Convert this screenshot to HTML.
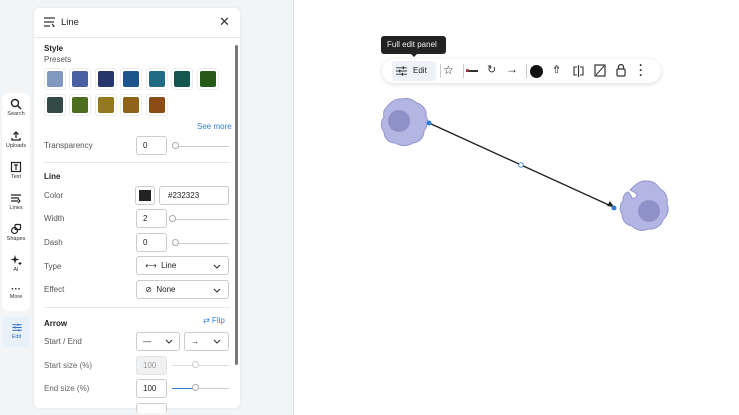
<!DOCTYPE html>
<html><head><style>
*{box-sizing:border-box;margin:0;padding:0}
body{width:739px;height:415px;overflow:hidden;background:#f2f4f6;font-family:"Liberation Sans",sans-serif;position:relative;color:#333}
.canvas{position:absolute;left:293px;top:0;width:446px;height:415px;background:#fff;border-left:1px solid #dde1e5}
.rail{position:absolute;left:2px;top:93px;width:28px;height:218px;background:#fff;border-radius:5px}
.ri{position:absolute;left:0;width:28px;text-align:center;font-size:5.5px;color:#333}
.ri svg{display:block;margin:0 auto 1px}
.editb{position:absolute;left:3px;top:317px;width:27px;height:30px;background:#e8f0fa;border-radius:4px;text-align:center;font-size:5.5px;color:#2f6fc0}
.panel{position:absolute;left:34px;top:8px;width:206px;height:400px;background:#fff;border-radius:5px;box-shadow:0 0 3px rgba(0,0,0,.08)}
.t{position:absolute;font-size:8px;color:#555}
.b{position:absolute;font-size:8px;font-weight:bold;color:#222}
.sw{position:absolute;width:22px;height:22px;border:1px solid #eee;border-radius:3px;padding:2px}
.sw i{display:block;width:16px;height:16px;border-radius:2px}
.in{position:absolute;height:19px;border:1px solid #ccc;border-radius:3px;font-size:8px;line-height:17px;padding-left:6px;color:#222;background:#fff}
.sl{position:absolute;height:1px;background:#ccc}
.kn{position:absolute;width:7px;height:7px;border:1px solid #aaa;border-radius:50%;background:#fff}
.hr{position:absolute;left:10px;width:186px;height:1px;background:#e6e6e6}
.chev{position:absolute;width:8px;height:5px}
.tb{position:absolute;left:382px;top:59px;width:279px;height:24px;background:#fff;border-radius:12px;box-shadow:0 1px 5px rgba(0,0,0,.15)}
</style></head><body>
<div class="canvas"></div>

<div class="rail">
 <div class="ri" style="top:5px"><svg width="12" height="12" viewBox="0 0 12 12"><circle cx="5" cy="5" r="3.5" fill="none" stroke="#222" stroke-width="1.4"/><path d="M7.5 7.5L11 11" stroke="#222" stroke-width="1.5"/></svg>Search</div>
 <div class="ri" style="top:37px"><svg width="12" height="12" viewBox="0 0 12 12"><path d="M6 8V2M3.5 4.5L6 2l2.5 2.5M2 8v2h8V8" fill="none" stroke="#222" stroke-width="1.3"/></svg>Uploads</div>
 <div class="ri" style="top:68px"><svg width="12" height="12" viewBox="0 0 12 12"><rect x="1.5" y="1.5" width="9" height="9" fill="none" stroke="#222" stroke-width="1.2"/><path d="M4 4h4M6 4v5" stroke="#222" stroke-width="1.2"/></svg>Text</div>
 <div class="ri" style="top:99px"><svg width="12" height="12" viewBox="0 0 12 12"><path d="M1 3h10M1 6h8M1 9h7M8 7l2 2-2 2" fill="none" stroke="#222" stroke-width="1.2"/></svg>Lines</div>
 <div class="ri" style="top:130px"><svg width="12" height="12" viewBox="0 0 12 12"><circle cx="4.5" cy="7.5" r="3" fill="none" stroke="#222" stroke-width="1.2"/><rect x="5" y="1.5" width="5.5" height="5" rx="1" fill="none" stroke="#222" stroke-width="1.2"/></svg>Shapes</div>
 <div class="ri" style="top:161px"><svg width="12" height="12" viewBox="0 0 12 12"><path d="M5 1L6 4.5 9.5 5.5 6 6.5 5 10 4 6.5 .5 5.5 4 4.5z" fill="#222"/><path d="M10 8v3M8.5 9.5h3" stroke="#222"/></svg>AI</div>
 <div class="ri" style="top:193px"><div style="font-size:10px;line-height:8px;font-weight:bold">···</div>More</div>
</div>
<div class="editb"><svg width="12" height="11" viewBox="0 0 12 12" style="display:block;margin:5px auto 1px"><path d="M1 3h10M1 6h10M1 9h10" stroke="#2f6fc0" stroke-width="1"/><path d="M7 2v2M4 5v2M8 8v2" stroke="#2f6fc0" stroke-width="1.4"/></svg>Edit</div>

<div class="panel">
 <svg style="position:absolute;left:10px;top:9px" width="12" height="10" viewBox="0 0 12 10"><path d="M0 1h11M0 5h10M0 9h6M8 7l2 2-2 2" fill="none" stroke="#333" stroke-width="1.2"/></svg>
 <div style="position:absolute;left:27px;top:9px;font-size:9.5px;color:#222">Line</div>
 <div style="position:absolute;left:185px;top:6px;font-size:13px;color:#333">✕</div>
 <div class="hr" style="left:0;width:206px;top:29px"></div>
 <div style="position:absolute;left:201px;top:37px;width:3px;height:320px;background:#777;border-radius:2px"></div>

 <div class="b" style="left:10px;top:36px">Style</div>
 <div class="t" style="left:10px;top:47px">Presets</div>
 <div class="sw" style="left:10px;top:60px"><i style="background:#8198bf"></i></div>
 <div class="sw" style="left:35px;top:60px"><i style="background:#4a5ea4"></i></div>
 <div class="sw" style="left:61px;top:60px"><i style="background:#24366a"></i></div>
 <div class="sw" style="left:86px;top:60px"><i style="background:#1d548e"></i></div>
 <div class="sw" style="left:112px;top:60px"><i style="background:#216b84"></i></div>
 <div class="sw" style="left:137px;top:60px"><i style="background:#145650"></i></div>
 <div class="sw" style="left:163px;top:60px"><i style="background:#275a18"></i></div>
 <div class="sw" style="left:10px;top:86px"><i style="background:#344a47"></i></div>
 <div class="sw" style="left:35px;top:86px"><i style="background:#4e6d1f"></i></div>
 <div class="sw" style="left:61px;top:86px"><i style="background:#947a1c"></i></div>
 <div class="sw" style="left:86px;top:86px"><i style="background:#8f641a"></i></div>
 <div class="sw" style="left:112px;top:86px"><i style="background:#8c4c15"></i></div>
 <div style="position:absolute;left:163px;top:114px;font-size:8px;color:#2f7fd0">See more</div>

 <div class="t" style="left:10px;top:133px">Transparency</div>
 <div class="in" style="left:102px;top:128px;width:31px">0</div>
 <div class="sl" style="left:142px;top:138px;width:53px"></div><div class="kn" style="left:138px;top:134px"></div>
 <div class="hr" style="top:154px"></div>

 <div class="b" style="left:10px;top:164px">Line</div>
 <div class="t" style="left:10px;top:183px">Color</div>
 <div style="position:absolute;left:101px;top:178px;width:20px;height:19px;border:1px solid #ccc;border-radius:3px;padding:3px"><div style="width:12px;height:11px;background:#232323"></div></div>
 <div class="in" style="left:125px;top:178px;width:70px;padding-left:8px">#232323</div>

 <div class="t" style="left:10px;top:206px">Width</div>
 <div class="in" style="left:102px;top:201px;width:31px">2</div>
 <div class="sl" style="left:140px;top:211px;width:55px"></div><div class="kn" style="left:135px;top:207px"></div>
 <div class="t" style="left:10px;top:230px">Dash</div>
 <div class="in" style="left:102px;top:225px;width:31px">0</div>
 <div class="sl" style="left:142px;top:235px;width:53px"></div><div class="kn" style="left:138px;top:231px"></div>

 <div class="t" style="left:10px;top:254px">Type</div>
 <div class="in" style="left:102px;top:248px;width:93px">&nbsp;⟷&nbsp; Line</div>
 <svg class="chev" style="left:179px;top:256px" viewBox="0 0 8 5"><path d="M1 1l3 3 3-3" fill="none" stroke="#333" stroke-width="1.1"/></svg>
 <div class="t" style="left:10px;top:277px">Effect</div>
 <div class="in" style="left:102px;top:272px;width:93px">&nbsp;⊘&nbsp; None</div>
 <svg class="chev" style="left:179px;top:280px" viewBox="0 0 8 5"><path d="M1 1l3 3 3-3" fill="none" stroke="#333" stroke-width="1.1"/></svg>
 <div class="hr" style="top:299px"></div>

 <div class="b" style="left:10px;top:311px">Arrow</div>
 <div style="position:absolute;left:169px;top:308px;font-size:8px;color:#2f7fd0">⇄ Flip</div>
 <div class="t" style="left:10px;top:329px">Start / End</div>
 <div class="in" style="left:102px;top:324px;width:44px">—</div>
 <svg class="chev" style="left:131px;top:331px" viewBox="0 0 8 5"><path d="M1 1l3 3 3-3" fill="none" stroke="#333" stroke-width="1.1"/></svg>
 <div class="in" style="left:150px;top:324px;width:45px">→</div>
 <svg class="chev" style="left:179px;top:331px" viewBox="0 0 8 5"><path d="M1 1l3 3 3-3" fill="none" stroke="#333" stroke-width="1.1"/></svg>
 <div class="t" style="left:10px;top:353px;color:#666">Start size (%)</div>
 <div class="in" style="left:102px;top:348px;width:31px;background:#f0f1f3;border-color:#e4e4e4;color:#999">100</div>
 <div class="sl" style="left:138px;top:357px;width:57px;background:#ddd"></div><div class="kn" style="left:158px;top:353px;border-color:#ccc"></div>
 <div class="t" style="left:10px;top:376px;color:#666">End size (%)</div>
 <div class="in" style="left:102px;top:371px;width:31px">100</div>
 <div class="sl" style="left:138px;top:380px;width:57px"></div><div class="sl" style="left:138px;top:380px;width:22px;background:#2f7fd0"></div><div class="kn" style="left:158px;top:376px"></div>
 <div class="in" style="left:102px;top:395px;width:31px;height:10px;border-bottom:none"></div>
</div>

<div style="position:absolute;left:381px;top:36px;width:65px;height:18px;background:#222;border-radius:3px;color:#eee;font-size:8px;line-height:18px;padding-left:6px">Full edit panel</div>
<div style="position:absolute;left:410px;top:53px;width:0;height:0;border-left:4px solid transparent;border-right:4px solid transparent;border-top:4px solid #222"></div>
<div class="tb">
 <div style="position:absolute;left:10px;top:2px;width:44px;height:20px;background:#eef2f6;border-radius:3px"></div>
 <svg style="position:absolute;left:14px;top:7px" width="11" height="10" viewBox="0 0 12 10"><path d="M0 1.5h12M0 5h12M0 8.5h12" stroke="#333"/><path d="M8 0v3M4 3.5v3M7 7v3" stroke="#333" stroke-width="1.5"/></svg>
 <div style="position:absolute;left:31px;top:7px;font-size:8px;color:#222">Edit</div>
 <div style="position:absolute;left:58px;top:5px;width:1px;height:14px;background:#ccc"></div>
 <div style="position:absolute;left:61px;top:4px;font-size:12px;color:#222">☆</div>
 <div style="position:absolute;left:81px;top:5px;width:1px;height:14px;background:#ccc"></div>
 <div style="position:absolute;left:84px;top:11px;width:12px;height:1.5px;background:#333"></div><div style="position:absolute;left:84px;top:10px;width:3px;height:3px;background:#a33;border-radius:50%"></div>
 <div style="position:absolute;left:105px;top:4px;font-size:11px;color:#333">↻</div>
 <div style="position:absolute;left:124px;top:3px;font-size:12px;color:#222">→</div>
 <div style="position:absolute;left:144px;top:5px;width:1px;height:14px;background:#ccc"></div>
 <div style="position:absolute;left:148px;top:6px;width:13px;height:13px;background:#111;border-radius:50%"></div>
 <div style="position:absolute;left:170px;top:4px;font-size:11px;color:#333">⇮</div>
 <svg style="position:absolute;left:191px;top:6px" width="11" height="12"><path d="M5.5 0v12M4 2H1v8h3M7 2h3v8H7" fill="none" stroke="#333" stroke-width="1.1"/></svg>
 <svg style="position:absolute;left:212px;top:5px" width="12" height="13"><rect x="1" y="1" width="10" height="11" fill="none" stroke="#333" stroke-width="1.2"/><path d="M2 11L10 2" stroke="#333"/></svg>
 <svg style="position:absolute;left:234px;top:5px" width="10" height="13"><rect x="1" y="5" width="8" height="7" rx="1" fill="none" stroke="#333" stroke-width="1.2"/><path d="M2.5 5V3a2.5 2.5 0 015 0v2" fill="none" stroke="#333" stroke-width="1.2"/></svg>
 <div style="position:absolute;left:257px;top:4px;font-size:12px;font-weight:bold;color:#333;line-height:5px;width:4px">·<br>·<br>·</div>
</div>

<svg style="position:absolute;left:0;top:0" width="739" height="415">
 <path d="M386 108c4-6 10-10 17-9 5-2 10 1 14 4 6 2 10 7 9 13 3 5 1 11-2 15 0 6-4 11-11 12-6 4-13 3-18 0-6 0-11-5-11-11-4-5-3-11 0-15-1-4 0-7 2-9z" fill="#b3b5e3" stroke="#9496cf" stroke-width="1"/>
 <circle cx="399" cy="121" r="11" fill="#8e90c8"/>
 <path d="M630 190c5-5 10-10 17-9 6 0 10 3 13 8 6 3 8 9 7 15 3 6 0 12-4 16-2 6-8 10-15 9-6 3-12 1-16-3-6-1-10-6-10-12-3-4-2-10 1-13 0-5 2-8 5-9 2 1 3 4 4 6 3 1 5-1 5-3-1-3-4-3-7-5z" fill="#b3b5e3" stroke="#9496cf" stroke-width="1"/>
 <circle cx="649" cy="211" r="11" fill="#8e90c8"/>
 <line x1="429" y1="123" x2="611" y2="206" stroke="#232323" stroke-width="1.4"/>
 <path d="M614 207l-7-1 3-5z" fill="#232323"/>
 <circle cx="429" cy="123" r="2.5" fill="#2f7fd0"/>
 <circle cx="614" cy="208" r="2.5" fill="#2f7fd0"/>
 <circle cx="521" cy="165" r="2.3" fill="#fff" stroke="#2f7fd0" stroke-width=".8"/>
</svg>
</body></html>
